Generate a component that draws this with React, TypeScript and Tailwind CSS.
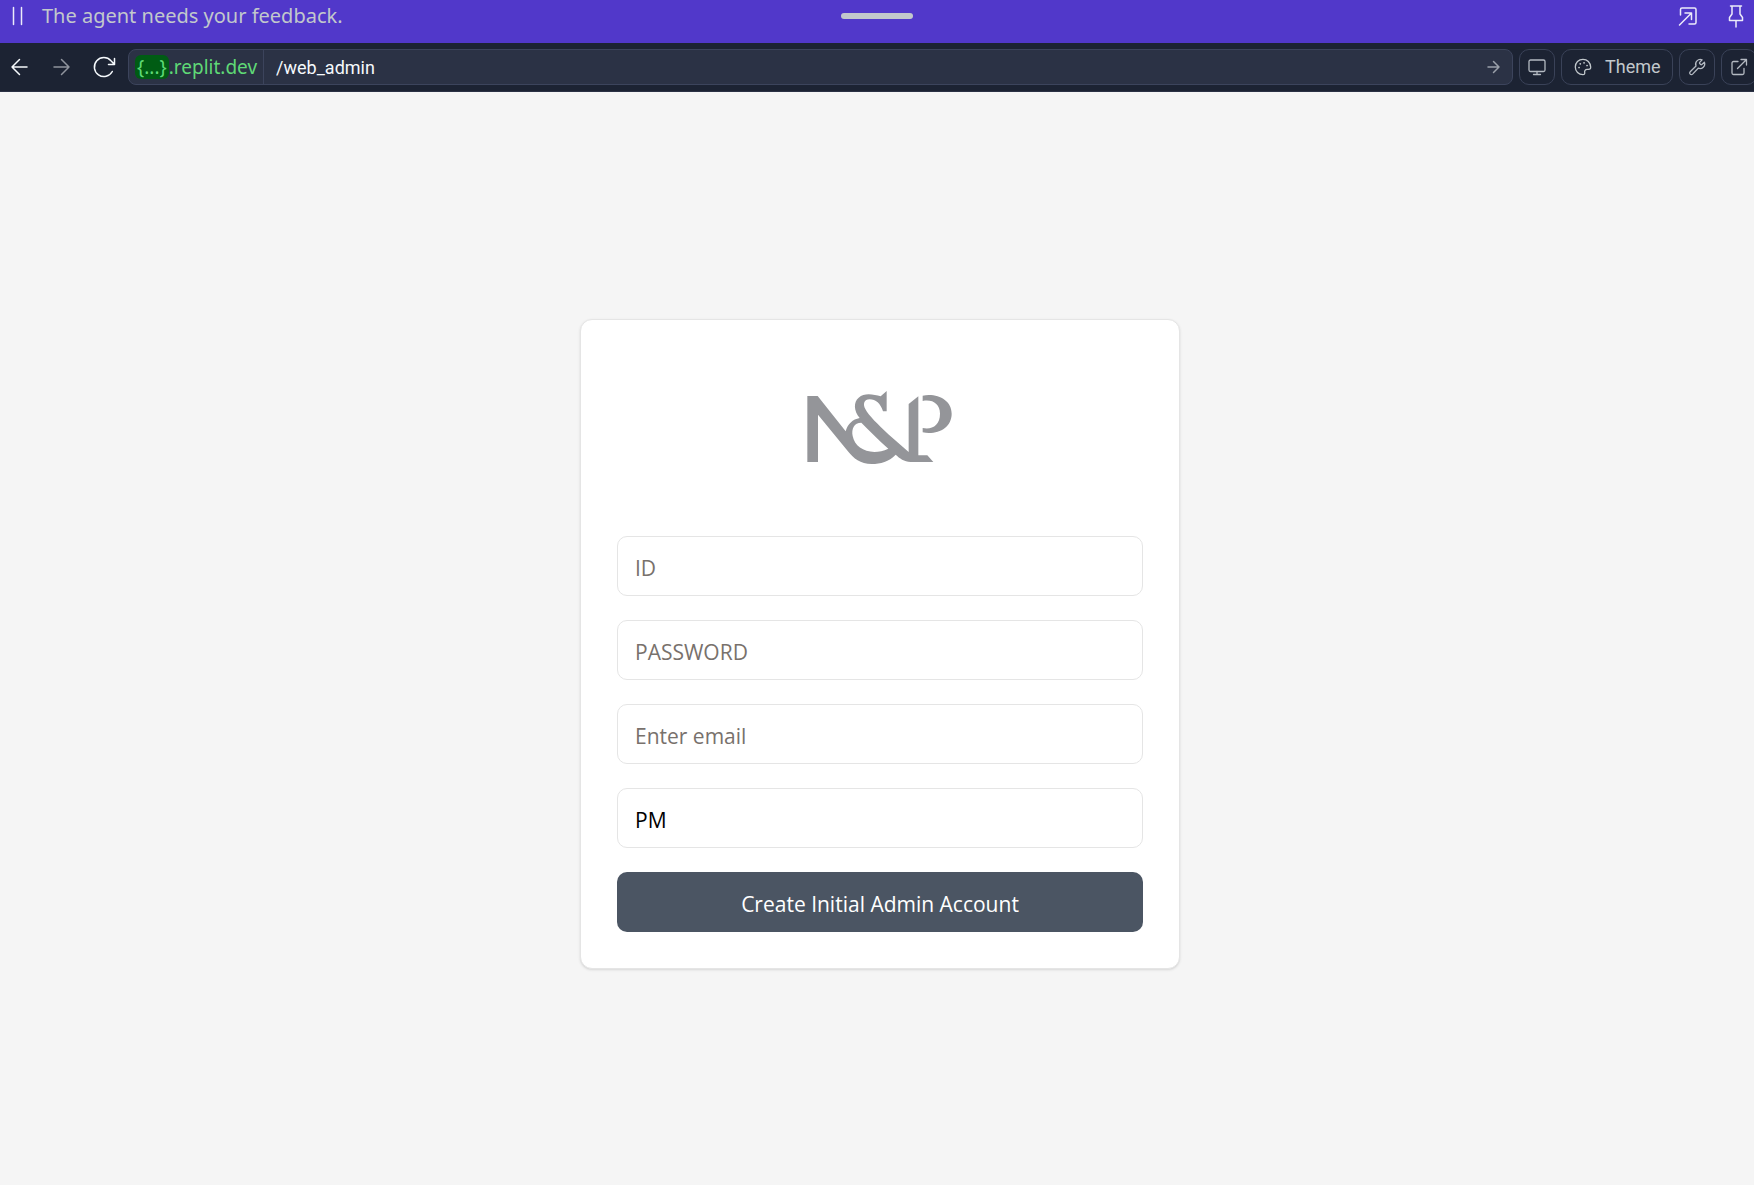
import React from 'react';

function Icon({ size = 24, children }: { size?: number; children: React.ReactNode }) {
  return (
    <svg
      width={size}
      height={size}
      viewBox={`0 0 ${size} ${size}`}
      aria-hidden="true"
      fill="none"
      stroke="currentColor"
      strokeWidth={size === 24 ? 1.5 : 1.3}
      strokeLinecap="round"
      strokeLinejoin="round"
    >
      {children}
    </svg>
  );
}

function Banner() {
  return (
    <header className="grid h-[43px] grid-cols-[1fr_auto_1fr] items-center bg-[#5138ca] pb-3 pl-1.5 pr-3 text-[#eceafa]">
      <div className="flex items-center gap-3">
        <Icon>
          <path d="M7.5 3.500v17M15.500 3.500v17" />
        </Icon>
        <p className="text-[20px] leading-6 text-[#c2c8cc]">The agent needs your feedback.</p>
      </div>
      <div className="h-1.5 w-[72px] rounded-full bg-[#c2c8cc]" />
      <div className="flex items-center justify-end gap-6">
        <button type="button" aria-label="Open in new window">
          <Icon>
            <path d="M4.500 11V5.500a1.500 1.500 0 0 1 1.500-1.500h12.500a1.500 1.500 0 0 1 1.500 1.500v13a1.500 1.500 0 0 1-1.500 1.500H13" />
            <path d="M3.500 21 15.500 9M9 9h6.500v6.500" />
          </Icon>
        </button>
        <button type="button" aria-label="Pin">
          <Icon>
            <path d="M6.500 2h11M8 2v8l-2.500 3.500v3h13v-3L16 10V2M12 16.500V23" />
          </Icon>
        </button>
      </div>
    </header>
  );
}

const tool =
  'flex h-9 w-9 shrink-0 items-center justify-center rounded-[10px] border border-[#3a4258] text-[#b4bac2]';

function Toolbar() {
  return (
    <nav className="flex items-center border-b border-[#2b3245] bg-[#1c2333] py-1.5 pl-1 pr-[3px] text-[#f5f9fc]">
      <div className="mr-2 flex gap-2.5">
        <button type="button" aria-label="Back" className="flex w-8 items-center justify-center">
          <Icon>
            <path d="M19 12H4M11.500 4.500 4 12l7.500 7.500" />
          </Icon>
        </button>
        <button type="button" aria-label="Forward" className="flex w-8 items-center justify-center text-[#8f949d]">
          <Icon>
            <path d="M4 12h15M11.500 4.500 19 12l-7.500 7.500" />
          </Icon>
        </button>
        <button type="button" aria-label="Reload" className="flex w-8 items-center justify-center">
          <Icon>
            <path d="M20.300 16.500A9.500 9.500 0 1 1 19 5.800L22.500 9.500M22.500 3.500v6h-6" />
          </Icon>
        </button>
      </div>
      <div className="mr-1.5 flex h-9 min-w-0 flex-1 items-center rounded-lg border border-[#3c445c] bg-[#2b3245] text-[19px] leading-6">
        <div className="flex h-full shrink-0 items-center border-r border-[#3c445c] pl-1.5 pr-1.5 text-[#5fd976]">
          <span className="rounded-md bg-[#005c14] px-0.5">{'{...}'}</span>
          <span>.replit.dev</span>
        </div>
        <input
          aria-label="Path"
          defaultValue="/web_admin"
          className="h-full min-w-0 flex-1 bg-transparent pl-3 font-['Roboto',sans-serif] text-[18px] outline-none"
        />
        <button type="button" aria-label="Go" className="mr-1.5 text-[#9aa0aa]">
          <Icon>
            <path d="M6 12h11M11.500 6.500 17 12l-5.500 5.500" />
          </Icon>
        </button>
      </div>
      <div className="flex gap-1.5">
        <button type="button" aria-label="Device size" className={tool}>
          <Icon size={20}>
            <rect x="2" y="3" width="16" height="11.500" rx="1.500" />
            <path d="M10 14.500v3M6.500 17.500h7" />
          </Icon>
        </button>
        <button
          type="button"
          className="flex h-9 w-28 shrink-0 items-center gap-3 rounded-[10px] border border-[#3a4258] pl-[11px] font-['Roboto',sans-serif] text-[18px] leading-6 text-[#c2c8cc]"
        >
          <Icon size={20}>
            <path d="M10 2.300c-4.400 0-7.700 3.400-7.700 7.700s3.400 7.700 7.700 7.700c1.300 0 1.900-.9 1.700-2-.4-2 .5-3.300 2.500-3.300h1.300c1.600 0 2.300-.8 2.200-2.300C17.500 5.600 14.200 2.300 10 2.300Z" />
            <path d="M6 10.500h.1M7.200 6.800h.1M11 5.800h.1M14 8.500h.1" strokeWidth="1.700" />
          </Icon>
          Theme
        </button>
        <button type="button" aria-label="Developer tools" className={tool}>
          <Icon size={20}>
            <path d="M12.700 5.400a.8.800 0 0 0 0 1.100l1 1a.8.800 0 0 0 1.100 0l2.600-2.300a4.700 4.700 0 0 1-6.200 6l-5.600 5.900a1.600 1.600 0 0 1-2.400-2.400l5.800-5.700a4.700 4.700 0 0 1 6.100-6.200Z" />
          </Icon>
        </button>
        <button type="button" aria-label="Open in new tab" className={tool}>
          <Icon size={20}>
            <path d="M9 4.500H4.500A1.500 1.500 0 0 0 3 6v10a1.500 1.500 0 0 0 1.500 1.500h9A1.500 1.500 0 0 0 15 16v-4.500M12 2.500h5.500V8M17.500 2.500 8.500 11.500" />
          </Icon>
        </button>
      </div>
    </nav>
  );
}

function Logo() {
  return (
    <svg width="200" height="110" viewBox="0 9 600 330" role="img" aria-label="N&P" fill="#949599">
      <path
        fillRule="evenodd"
        d="M82 78H113L197 184C203 162 218 148 239 144C221 122 220 96 236 83C254 67 282 74 302 79L320 63V124H309C302 101 287 88 269 88C252 88 248 103 256 117C267 138 293 162 325 193L386 246V102L415 79V256H442L460 276H392C372 275 359 265 347 254C326 275 302 282 275 282C241 282 220 264 205 245L114 134V276H82ZM244 158C222 158 214 177 218 198C225 237 274 260 325 236C296 210 268 182 244 158Z"
      />
      <path d="M428 77C472 69 515 90 515 131C515 174 473 195 428 187V174C456 180 480 166 480 131C480 101 457 87 428 93Z" />
    </svg>
  );
}

const field =
  'h-15 w-full rounded-[10px] border border-[#e5e5e5] bg-white px-[17px] pt-1 text-[21px] leading-7 text-black outline-none placeholder:text-[#78716c]';

function SetupCard() {
  return (
    <form
      onSubmit={(e) => e.preventDefault()}
      className="w-full max-w-[600px] rounded-xl border border-[#e5e5e5] bg-white p-9 font-['Open_Sans','Noto_Sans',sans-serif] shadow-sm"
    >
      <div className="mb-9 flex h-36 items-center justify-center">
        <Logo />
      </div>
      <div className="flex flex-col gap-6">
        <input className={field} aria-label="ID" placeholder="ID" />
        <input className={field} aria-label="Password" type="password" placeholder="PASSWORD" />
        <input className={field} aria-label="Email" type="email" placeholder="Enter email" />
        <input className={field} aria-label="Role" defaultValue="PM" />
        <button type="submit" className="h-15 w-full rounded-[10px] bg-[#4b5563] pt-1 text-[21px] leading-7 text-white">
          Create Initial Admin Account
        </button>
      </div>
    </form>
  );
}

export default function App() {
  return (
    <div className="h-screen overflow-hidden bg-[#f5f5f5] font-['Noto_Sans',sans-serif]">
      <div className="-mr-1.5 flex h-full flex-col">
        <Banner />
        <Toolbar />
        <main className="flex flex-1 items-center justify-center pt-2.5">
          <SetupCard />
        </main>
      </div>
    </div>
  );
}
